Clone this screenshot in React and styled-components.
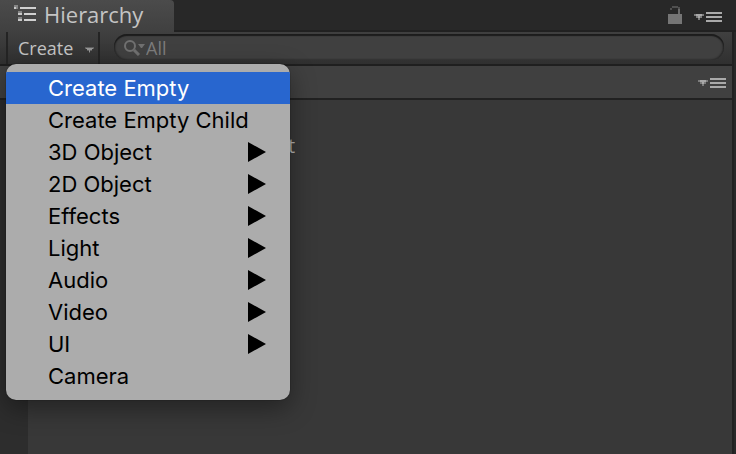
import React, { useState } from 'react';
import styled, { createGlobalStyle } from 'styled-components';

const GlobalStyle = createGlobalStyle`
  * {
    box-sizing: border-box;
  }

  html, body, #root {
    height: 100%;
  }

  body {
    margin: 0;
    background: #282828;
    font-family: "Open Sans", "Noto Sans", sans-serif;
    font-size: 20px;
    color: #c4c4c4;
    overflow: hidden;
  }

  button, input {
    font: inherit;
    color: inherit;
    border: 0;
    margin: 0;
    padding: 0;
    background: none;
  }
`;

const Panel = styled.div`
  min-height: 100%;
  display: flex;
  flex-direction: column;
`;

const TabBar = styled.div`
  height: 32px;
  display: flex;
  align-items: center;
  justify-content: space-between;
  padding-right: 14px;
  background: #282828;
  box-shadow: inset 0 -2px #212121;
`;

const Tab = styled.button`
  width: 174px;
  height: 32px;
  display: flex;
  align-items: center;
  gap: 8px;
  padding: 0 0 4px 14px;
  font-size: 22px;
  line-height: 28px;
  border-top-right-radius: 4px;
  background: linear-gradient(#4b4b4b, #404040);
`;

const TabTools = styled.div`
  display: flex;
  align-items: center;
  gap: 12px;
  padding-bottom: 2px;
`;

const IconButton = styled.button`
  display: flex;
`;

const Content = styled.div`
  flex: 1;
  display: flex;
  flex-direction: column;
  margin-right: 2px;
  border-right: 2px solid #212121;
`;

const Toolbar = styled.div`
  height: 34px;
  display: flex;
  padding: 0 8px 0 6px;
  background: linear-gradient(#404040, #303030);
  border-bottom: 2px solid #1f1f1f;
`;

const CreateGroup = styled.div`
  position: relative;
  width: 94px;
  height: 32px;
  border: solid #242424;
  border-width: 0 2px;
`;

const CreateButton = styled.button`
  width: 100%;
  height: 32px;
  display: flex;
  align-items: center;
  justify-content: space-between;
  padding: 0 4px 0 10px;
  font-size: 18px;
`;

const Search = styled.label`
  flex: 1;
  height: 26px;
  display: flex;
  align-items: center;
  margin: 2px 0 0 14px;
  padding: 2px 10px 0;
  border-radius: 13px;
  background: #404040;
  box-shadow: inset 0 2px 1px #1c1c1c, inset 1px 0 2px #262626, inset -1px 0 2px #262626;
`;

const SearchInput = styled.input`
  flex: 1;
  min-width: 0;
  height: 24px;
  font-size: 18px;
  outline: none;

  &::placeholder {
    color: #7c7c7c;
    opacity: 1;
  }
`;

const SceneRow = styled.div`
  height: 34px;
  display: flex;
  align-items: center;
  justify-content: flex-end;
  padding: 0 6px 2px 0;
  background: #404040;
  border-bottom: 2px solid #212121;
`;

const Tree = styled.div`
  flex: 1;
  padding-top: 30px;
  border-left: 28px solid #2d2d2d;
  background: #383838;
`;

const TreeItem = styled.div`
  height: 32px;
  padding-left: 260px;
  line-height: 32px;
  color: #b4b4b4;
`;

const Menu = styled.div`
  position: absolute;
  z-index: 10;
  top: 100%;
  left: -2px;
  width: 284px;
  padding: 8px 0;
  border-radius: 10px;
  background: #acacac;
  box-shadow: 0 0 1px #000, 0 8px 26px rgba(0, 0, 0, 0.4);
  overflow: hidden;
`;

const MenuItem = styled.button`
  width: 100%;
  height: 32px;
  display: flex;
  align-items: center;
  justify-content: space-between;
  padding: 0 24px 0 42px;
  font-family: Inter, "Liberation Sans", sans-serif;
  font-size: 22px;
  color: ${(props) => (props.$active ? '#fff' : '#000')};
  background: ${(props) => (props.$active ? '#2866cf' : 'transparent')};
  outline: none;
`;

const menuItems = [
  { label: 'Create Empty' },
  { label: 'Create Empty Child' },
  { label: '3D Object', submenu: true },
  { label: '2D Object', submenu: true },
  { label: 'Effects', submenu: true },
  { label: 'Light', submenu: true },
  { label: 'Audio', submenu: true },
  { label: 'Video', submenu: true },
  { label: 'UI', submenu: true },
  { label: 'Camera' },
];

const HierarchyIcon = () => (
  <svg width="22" height="18" viewBox="0 0 22 18" aria-hidden="true">
    <path fill="#d0d0d0" d="M6 2h16v2H6zM10 8h12v2H10zM10 14h12v2H10z" />
    <path fill="#858585" d="M0 0h4v4H0zM4 6h4v2H4zM4 12h4v2H4z" />
    <path fill="#c8c8c8" d="M0 2h2v2H0zM4 8h4v2H4zM4 14h4v2H4z" />
  </svg>
);

const LockIcon = () => (
  <svg width="14" height="18" viewBox="0 0 14 18" aria-hidden="true">
    <path fill="#757575" d="M0 8h14v10H0z" />
    <path fill="#6c6c6c" d="M10 3h2v5h-2z" />
    <path fill="#505050" d="M2 2h2v2H2zM4 0h6v2H4zM10 1h2v2h-2z" />
  </svg>
);

const OptionsIcon = () => (
  <svg width="28" height="14" viewBox="0 0 28 14" aria-hidden="true">
    <path fill="#7c7c7c" d="M0 6h10v2H8v2H6v2H4v-2H2V8H0z" />
    <path fill="#a8a8a8" d="M2 6h6v2H6v2H4V8H2z" />
    <path fill="#aaa" d="M12 4h16v2H12zM12 8h16v2H12zM12 12h16v2H12z" />
  </svg>
);

const DropIcon = () => (
  <svg width="10" height="10" viewBox="0 0 10 10" aria-hidden="true">
    <path fill="#606060" d="M1 4h9v2H8v2H6v2H5V8H3V6H1z" />
    <path fill="#969696" d="M2 5h7v1H8v1H6v2H5V7H3V6H2z" />
  </svg>
);

const SearchIcon = () => (
  <svg width="22" height="16" viewBox="0 0 22 16" aria-hidden="true">
    <circle cx="6" cy="6" r="5" fill="none" stroke="#707070" strokeWidth="2" />
    <path stroke="#707070" strokeWidth="3" d="M10 10l5 5" />
    <path fill="#707070" d="M14 4h7l-3 4h-1z" />
  </svg>
);

const SubmenuArrow = () => (
  <svg width="18" height="20" viewBox="0 0 18 20" aria-hidden="true">
    <path fill="currentColor" d="M0 0l18 10L0 20z" />
  </svg>
);

export default function App() {
  const [open, setOpen] = useState(true);
  const [active, setActive] = useState(0);
  const [query, setQuery] = useState('');

  return (
    <Panel>
      <GlobalStyle />
      <TabBar>
        <Tab>
          <HierarchyIcon />
          Hierarchy
        </Tab>
        <TabTools>
          <IconButton aria-label="Lock"><LockIcon /></IconButton>
          <IconButton aria-label="Panel options"><OptionsIcon /></IconButton>
        </TabTools>
      </TabBar>
      <Content>
        <Toolbar>
          <CreateGroup>
            <CreateButton aria-haspopup="menu" aria-expanded={open} onClick={() => setOpen(!open)}>
              Create
              <DropIcon />
            </CreateButton>
            {open && (
              <Menu role="menu">
                {menuItems.map((item, index) => (
                  <MenuItem
                    key={item.label}
                    role="menuitem"
                    $active={index === active}
                    onMouseEnter={() => setActive(index)}
                    onFocus={() => setActive(index)}
                    onClick={() => !item.submenu && setOpen(false)}
                  >
                    {item.label}
                    {item.submenu && <SubmenuArrow />}
                  </MenuItem>
                ))}
              </Menu>
            )}
          </CreateGroup>
          <Search>
            <SearchIcon />
            <SearchInput
              aria-label="Search"
              placeholder="All"
              value={query}
              onChange={(e) => setQuery(e.target.value)}
            />
          </Search>
        </Toolbar>
        <SceneRow>
          <IconButton aria-label="Scene options"><OptionsIcon /></IconButton>
        </SceneRow>
        <Tree>
          <TreeItem>t</TreeItem>
        </Tree>
      </Content>
    </Panel>
  );
}
